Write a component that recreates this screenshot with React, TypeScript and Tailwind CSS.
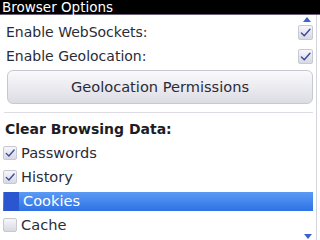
import React from "react";

function Check({ checked, small }: { checked: boolean; small?: boolean }) {
  const size = small ? "w-[14px] h-[14px]" : "w-[15px] h-[15px]";
  return (
    <div
      className={`${size} rounded-[2px] border border-[#c8c8d0] bg-gradient-to-b from-[#f6f6fa] to-[#d8d8e2] flex items-center justify-center shrink-0`}
    >
      {checked && (
        <svg viewBox="0 0 16 16" className="w-full h-full">
          <path
            d="M3 8.5 L6.5 12 L13.5 4"
            fill="none"
            stroke="#3c4aa0"
            strokeWidth="1.8"
            strokeLinecap="round"
            strokeLinejoin="round"
          />
        </svg>
      )}
    </div>
  );
}

export default function App() {
  const font = { fontFamily: '"DejaVu Sans", sans-serif' };
  return (
    <div className="w-[320px] h-[240px] bg-white overflow-hidden relative text-[#2b2b38]" style={font}>
      <div className="h-[15px] bg-black border-b border-[#6a6078] text-white text-[13.5px] leading-[14px] pl-[2px]">
        Browser Options
      </div>

      {/* scrollbar */}
      <div className="absolute right-[3px] top-[15px] bottom-0 w-px bg-[#d4d4dc]" />
      <svg className="absolute right-[9px] top-[17px]" width="8" height="5" viewBox="0 0 8 5">
        <path d="M0 5 L4 0 L8 5 Z" fill="#3a62c8" />
      </svg>
      <svg className="absolute right-[8px] bottom-[1px]" width="8" height="5" viewBox="0 0 8 5">
        <path d="M0 0 L4 5 L8 0 Z" fill="#3a62c8" />
      </svg>

      <div className="pt-[5px] pr-[7px]">
        <div className="h-6 flex items-center justify-between pl-[6px] text-[14px]">
          <span>Enable WebSockets:</span>
          <Check checked />
        </div>
        <div className="h-6 flex items-center justify-between pl-[6px] text-[14px]">
          <span>Enable Geolocation:</span>
          <Check checked />
        </div>
        <div className="ml-[7px] mt-[2px] h-[34px] rounded-[6px] border border-[#c8c8d0] bg-gradient-to-b from-[#fafafc] to-[#dcdce4] flex items-center justify-center text-[14.6px]">
          Geolocation Permissions
        </div>
        <div className="ml-[4px] mt-[8px] h-px bg-[#dcdce2]" />
        <div className="h-6 mt-[4px] flex items-center pl-[5px] text-[14px] font-bold text-[#1c1c24]">
          Clear Browsing Data:
        </div>
        <div className="h-6 flex items-center gap-[4px] pl-[3px] text-[14.6px]">
          <Check checked small />
          <span>Passwords</span>
        </div>
        <div className="h-6 flex items-center gap-[4px] pl-[3px] text-[14.6px]">
          <Check checked small />
          <span>History</span>
        </div>
        <div className="h-6 flex items-center">
          <div className="ml-[3px] h-[19px] flex-1 flex items-center gap-[4px] bg-gradient-to-b from-[#5b9af4] to-[#2e72e4] text-white text-[14.6px]">
            <div className="w-[15px] h-[19px] bg-[#2a56d0] ml-[1px]" />
            <span>Cookies</span>
          </div>
        </div>
        <div className="h-6 flex items-center gap-[4px] pl-[3px] text-[14.6px]">
          <Check checked={false} small />
          <span>Cache</span>
        </div>
      </div>
    </div>
  );
}
